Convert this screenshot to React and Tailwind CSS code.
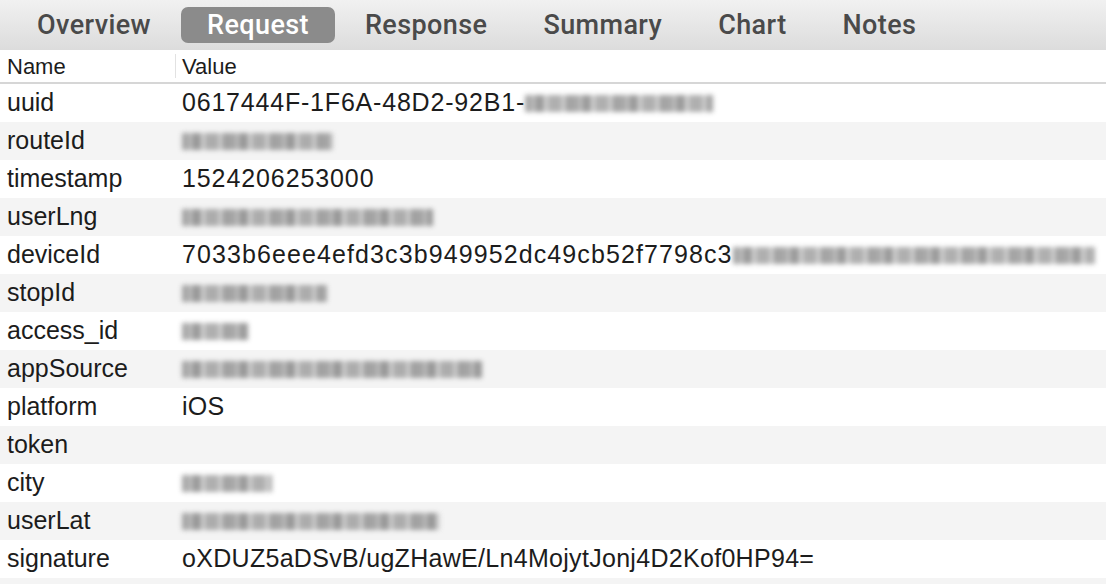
import React from "react";

const tabs = ["Overview", "Request", "Response", "Summary", "Chart", "Notes"];

// blur: size of the masked (pixelated) part of a value
const rows = [
    { name: "uuid", value: "0617444F-1F6A-48D2-92B1-", track: "tracking-[0.8px]", blur: "w-[188px]" },
    { name: "routeId", blur: "w-[151px]" },
    { name: "timestamp", value: "1524206253000", track: "tracking-[0.9px]" },
    { name: "userLng", blur: "w-[251px]" },
    { name: "deviceId", value: "7033b6eee4efd3c3b949952dc49cb52f7798c3", track: "tracking-[1.1px]", blur: "w-[362px]" },
    { name: "stopId", blur: "w-[145px]" },
    { name: "access_id", blur: "w-[66px]" },
    { name: "appSource", blur: "w-[300px]" },
    { name: "platform", value: "iOS", track: "tracking-[0.3px]" },
    { name: "token" },
    { name: "city", blur: "w-[90px]" },
    { name: "userLat", blur: "w-[258px]" },
    { name: "signature", value: "oXDUZ5aDSvB/ugZHawE/Ln4MojytJonj4D2Kof0HP94=", track: "tracking-[0.3px]" },
];

export default function App() {
    return (
        <div className="w-[1106px] h-[584px] overflow-hidden bg-white font-['Liberation_Sans',Arial,sans-serif] text-[#1c1c1c]">
            {/* tab bar */}
            <div className="h-[50px] flex items-center gap-[4px] pl-[11px] bg-gradient-to-b from-[#f1f1f1] to-[#dcdcdc] font-['Roboto',sans-serif] font-medium text-[27px] tracking-[0.4px]">
                {tabs.map((t) => (
                    <div
                        key={t}
                        className={`h-[36px] flex items-center px-[26px] rounded-[7px] ${t === "Request" ? "bg-[#8b8b8b] text-white" : "text-[#4a4a4a]"}`}
                    >
                        {t}
                    </div>
                ))}
            </div>

            {/* header */}
            <div className="h-[34px] flex items-center border-b-2 border-[#d6d6d6] text-[22px]">
                <div className="w-[176px] pl-[7px] h-[24px] flex items-center border-r border-[#e2e2e2]">Name</div>
                <div className="pl-[6px]">Value</div>
            </div>

            {/* rows */}
            {rows.map((r, i) => (
                <div key={r.name} className={`h-[38px] flex items-center text-[25px] ${i % 2 ? "bg-[#f4f4f4]" : "bg-white"}`}>
                    <div className="w-[182px] pl-[7px] shrink-0">{r.name}</div>
                    <div className={`flex items-center whitespace-nowrap ${r.track || ""}`}>
                        {r.value && <span>{r.value}</span>}
                        {r.blur && (
                            <div
                                className={`${r.blur} h-[17px] blur-[2.5px] opacity-75 bg-[repeating-linear-gradient(90deg,#8a8a8a_0_7px,#b4b4b4_7px_10px,#7a7a7a_10px_19px,#c8c8c8_19px_23px,#959595_23px_37px,#d2d2d2_37px_40px,#858585_40px_47px)]`}
                            />
                        )}
                    </div>
                </div>
            ))}
            <div className="h-[38px] bg-[#f4f4f4]" />
        </div>
    );
}
